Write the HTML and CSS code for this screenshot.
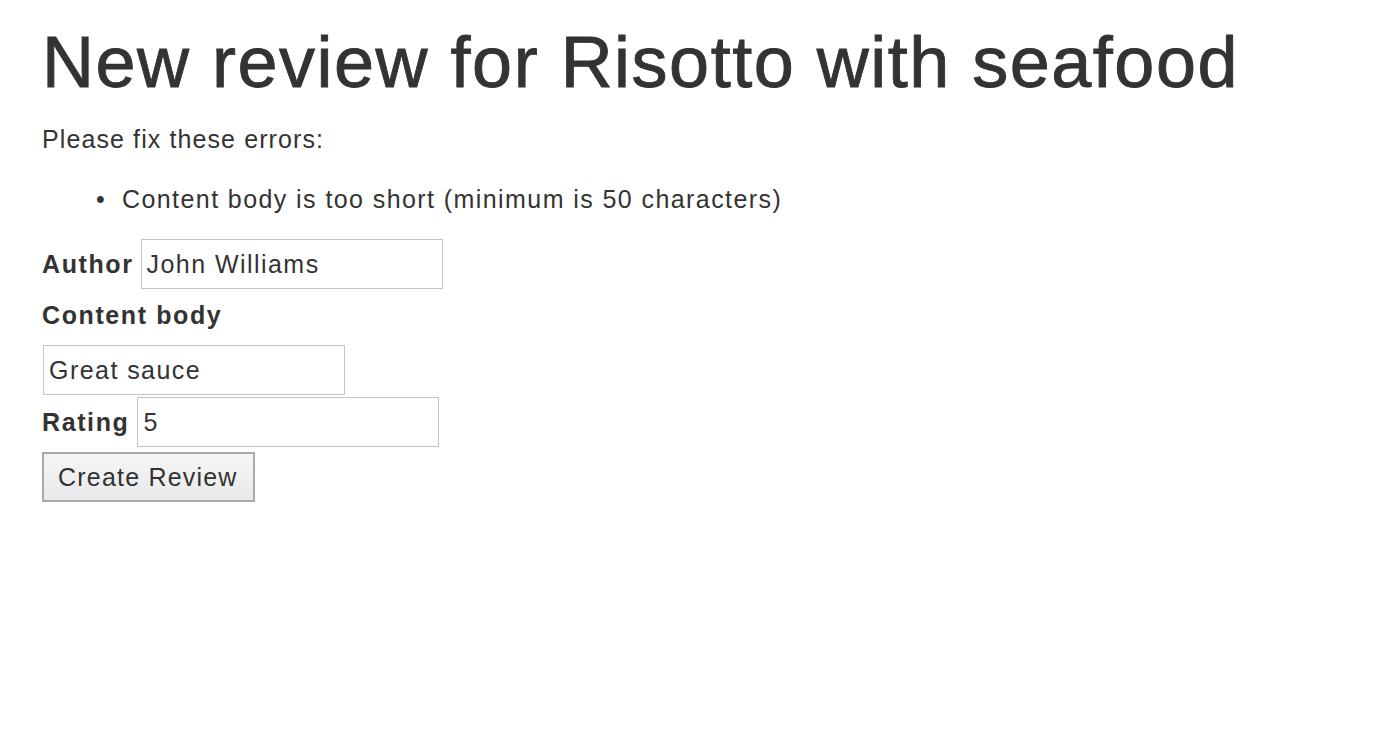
FILE: index.html
```html
<!DOCTYPE html>
<html>
<head>
<meta charset="utf-8">
<title>New review</title>
<link rel="stylesheet" href="styles.css">
</head>
<body>
<main class="page">
  <h1 class="title">New review for Risotto with seafood</h1>
  <div class="errors">
    <p class="errors-title">Please fix these errors:</p>
    <ul class="errors-list">
      <li class="error-item">Content body is too short (minimum is 50 characters)</li>
    </ul>
  </div>
  <form class="form">
    <div class="field inline author">
      <label class="label" for="author">Author</label>
      <input class="input" id="author" type="text" value="John Williams">
    </div>
    <div class="field stacked">
      <label class="label" for="body">Content body</label>
      <input class="input" id="body" type="text" value="Great sauce">
    </div>
    <div class="field inline rating">
      <label class="label" for="rating">Rating</label>
      <input class="input" id="rating" type="text" value="5">
    </div>
    <div class="actions">
      <button class="button" type="button">Create Review</button>
    </div>
  </form>
</main>
</body>
</html>
```

FILE: styles.css
```css
html, body {
  margin: 0;
  padding: 0;
  background: #ffffff;
}

body {
  font-family: "Liberation Sans", Arial, sans-serif;
  color: #333333;
  font-size: 25px;
  line-height: 30px;
  letter-spacing: 1.3px;
}

.page {
  padding: 22px 42px 0 42px;
}

.title {
  margin: 0;
  font-size: 72px;
  line-height: 80px;
  font-weight: normal;
  letter-spacing: 1.5px;
  -webkit-text-stroke: 0.9px #333333;
  color: #333333;
}

.errors-title {
  margin: 22px 0 0 0;
  letter-spacing: 1.1px;
}

.errors-list {
  list-style: none;
  margin: 30px 0 0 0;
  padding: 0 0 0 80px;
}

.error-item {
  display: flex;
  letter-spacing: 1.42px;
}

.error-item::before {
  content: "\2022";
  width: 26px;
  margin-left: -26px;
  flex-shrink: 0;
  letter-spacing: 0;
}

.form {
  margin-top: 25px;
  display: flex;
  flex-direction: column;
}

.field.inline {
  display: flex;
  align-items: baseline;
  gap: 8px;
}

.field.author {
  gap: 7px;
}

.field.stacked {
  display: flex;
  flex-direction: column;
  align-items: flex-start;
  margin-top: 11px;
}

.field.stacked .input {
  margin-top: 15px;
  margin-left: 1px;
}

.field.rating {
  margin-top: 2px;
}

.label {
  font-weight: bold;
  letter-spacing: 1.6px;
}

.input {
  box-sizing: border-box;
  width: 302px;
  height: 50px;
  border: 1px solid #c4c4c4;
  padding: 0 5px;
  font-family: "Liberation Sans", Arial, sans-serif;
  font-size: 25px;
  letter-spacing: 1.45px;
  color: #333333;
  background: #ffffff;
  outline: none;
}

.actions {
  margin-top: 5px;
}

.button {
  box-sizing: border-box;
  width: 213px;
  height: 50px;
  padding: 0 0 0 14px;
  text-align: left;
  border: 2px solid #a9a9a9;
  background: linear-gradient(#f6f6f6, #e9e9e9);
  font-family: "Liberation Sans", Arial, sans-serif;
  font-size: 25px;
  letter-spacing: 1.2px;
  color: #333333;
}
```
